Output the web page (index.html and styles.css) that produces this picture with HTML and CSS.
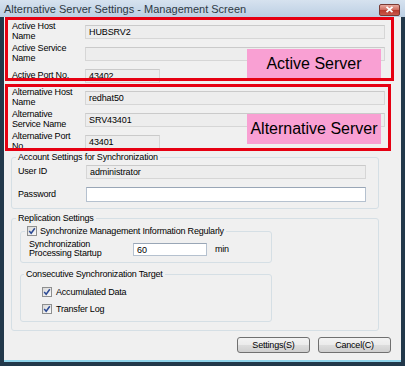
FILE: index.html
```html
<html>
<head>
    <title>Alternative Server Settings</title>
    <meta charset="UTF-8">
    <link rel="stylesheet" href="styles.css">
</head>
<body>
    <div class="window">
        <div class="titlebar">
            <span class="title">Alternative Server Settings - Management Screen</span>
            <span class="close-btn">
                <svg width="9" height="7" viewBox="0 0 9 7">
                    <path d="M1.5 0.8 L7.5 6.2 M7.5 0.8 L1.5 6.2" stroke="#fff" stroke-width="1.8"/>
                </svg>
            </span>
        </div>

        <div class="client">
            <!-- Server rows -->
            <div class="server-rows">
                <div class="srv-row">
                    <label class="lbl">Active Host<br>Name</label>
                    <div class="field ro">HUBSRV2</div>
                </div>
                <div class="srv-row">
                    <label class="lbl">Active Service<br>Name</label>
                    <div class="field ro"></div>
                </div>
                <div class="srv-row">
                    <label class="lbl">Active Port No.</label>
                    <div class="field ro short">43402</div>
                </div>
                <div class="srv-row">
                    <label class="lbl">Alternative Host<br>Name</label>
                    <div class="field ro">redhat50</div>
                </div>
                <div class="srv-row">
                    <label class="lbl">Alternative<br>Service Name</label>
                    <div class="field ro">SRV43401</div>
                </div>
                <div class="srv-row">
                    <label class="lbl">Alternative Port<br>No.</label>
                    <div class="field ro short">43401</div>
                </div>
            </div>

            <!-- Account -->
            <fieldset class="group account">
                <legend>Account Settings for Synchronization</legend>
                <div class="acc-rows">
                    <div class="acc-row">
                        <label class="lbl">User ID</label>
                        <div class="field ro acc-field">administrator</div>
                    </div>
                    <div class="acc-row">
                        <label class="lbl">Password</label>
                        <div class="field edit acc-field"></div>
                    </div>
                </div>
            </fieldset>

            <!-- Replication -->
            <fieldset class="group replication">
                <legend>Replication Settings</legend>
                <div class="rep-body">
                    <fieldset class="group sub sync">
                        <legend class="check-legend">
                            <span class="check"><svg width="8" height="8" viewBox="0 0 8 8"><path d="M1.2 4 L3.2 6.3 L6.8 1.3" fill="none" stroke="#2c4a94" stroke-width="1.5"/></svg></span>
                            Synchronize Management Information Regularly
                        </legend>
                        <div class="sync-row">
                            <label class="lbl">Synchronization<br>Processing Startup</label>
                            <div class="field edit num">60</div>
                            <span class="unit">min</span>
                        </div>
                    </fieldset>

                    <fieldset class="group sub target">
                        <legend>Consecutive Synchronization Target</legend>
                        <div class="check-list">
                            <div class="check-row">
                                <span class="check"><svg width="8" height="8" viewBox="0 0 8 8"><path d="M1.2 4 L3.2 6.3 L6.8 1.3" fill="none" stroke="#2c4a94" stroke-width="1.5"/></svg></span>
                                Accumulated Data
                            </div>
                            <div class="check-row">
                                <span class="check"><svg width="8" height="8" viewBox="0 0 8 8"><path d="M1.2 4 L3.2 6.3 L6.8 1.3" fill="none" stroke="#2c4a94" stroke-width="1.5"/></svg></span>
                                Transfer Log
                            </div>
                        </div>
                    </fieldset>
                </div>
            </fieldset>

            <div class="buttons">
                <button type="button" class="btn">Settings(S)</button>
                <button type="button" class="btn">Cancel(C)</button>
            </div>
        </div>

        <!-- Annotation boxes drawn over the dialog -->
        <div class="mark mark-active">
            <span class="tag tag-active">Active Server</span>
        </div>
        <div class="mark mark-alt">
            <span class="tag tag-alt">Alternative Server</span>
        </div>
    </div>
</body>
</html>
```

FILE: styles.css
```css
:root {
    --client: #f0f0f0;
    --frame: #22384a;
    --group-line: #d5dfe5;
    --mark-red: #e60012;
    --mark-pink: #f9a0d3;
}

body {
    margin: 0;
    font-family: "Liberation Sans", Arial, sans-serif;
    font-size: 9px;
    letter-spacing: -0.2px;
    color: #000;
    background: var(--frame);
}

.window {
    position: relative;
    width: 405px;
    height: 366px;
    background: var(--frame);
    display: flex;
    flex-direction: column;
}

.titlebar {
    height: 17px;
    display: flex;
    align-items: center;
    justify-content: space-between;
    padding: 0 5px 0 4px;
    background: linear-gradient(#d6e2ef, #bccfe3);
    box-sizing: border-box;
}

.title {
    font-size: 11px;
    letter-spacing: 0;
    color: #2e3944;
    white-space: nowrap;
}

.close-btn {
    width: 21px;
    height: 12px;
    margin-top: 2px;
    box-sizing: border-box;
    border: 1px solid #7a3a33;
    border-radius: 2px;
    background: linear-gradient(#e8aaa0, #cf6a5d 50%, #b8392c 51%, #c9584a);
    display: flex;
    align-items: center;
    justify-content: center;
}

.client {
    background: var(--client);
    margin: 0 4px;
    height: 345px;
    padding-top: 4px;
    box-sizing: border-box;
    border-bottom: 2px solid #8fd3ea;
}

/* server rows */
.server-rows {
    display: flex;
    flex-direction: column;
    gap: 1px;
    padding-left: 8px;
}

.srv-row {
    display: grid;
    grid-template-columns: 73px 300px;
    align-items: center;
    height: 21px;
}

.lbl {
    line-height: 9.5px;
}

.field {
    height: 14px;
    box-sizing: border-box;
    padding-left: 3px;
    font-size: 9px;
    letter-spacing: -0.1px;
    line-height: 12px;
    white-space: nowrap;
}

.field.ro {
    background: #ededed;
    border: 1px solid #d6d6d6;
    border-top-color: #cacaca;
}

.field.edit {
    background: #fff;
    border: 1px solid #b5c1cf;
    border-top-color: #99a6b6;
}

.field.short {
    width: 75px;
}

/* group boxes */
.group {
    margin: 0;
    padding: 0;
    border: 1px solid var(--group-line);
    border-radius: 3px;
    min-inline-size: 0;
}

.group legend {
    margin-left: 4px;
    padding: 0 2px;
    line-height: 10px;
}

.account {
    margin: 0 22px 0 7px;
}

.acc-rows {
    display: flex;
    flex-direction: column;
    gap: 8px;
    padding: 3px 0 6px 6px;
}

.acc-row {
    display: grid;
    grid-template-columns: 68px 280px;
    align-items: center;
}

.acc-row + .acc-row .acc-field {
    height: 15px;
}

.replication {
    margin: 4px 22px 0 7px;
}

.rep-body {
    padding: 3px 8px 8px 8px;
}

.sub {
    width: 252px;
    box-sizing: border-box;
}

.check-legend {
    display: flex;
    align-items: center;
    gap: 3px;
    line-height: 12px;
}

.check {
    width: 10px;
    height: 10px;
    box-sizing: border-box;
    border: 1px solid #8e8f8f;
    background: linear-gradient(135deg, #d8d8d8, #fafafa);
    display: inline-flex;
    align-items: center;
    justify-content: center;
}

.sync-row {
    display: grid;
    grid-template-columns: 104px 74px auto;
    align-items: center;
    height: 22px;
    padding: 2px 8px;
}

.sync-row .num {
    height: 13px;
}

.sync-row .unit {
    margin-left: 8px;
}

.target {
    margin-top: 6px;
}

.target legend {
    margin-left: 3px;
}

.check-list {
    display: flex;
    flex-direction: column;
    gap: 2px;
    padding: 5px 0 5px 21px;
}

.check-row {
    display: flex;
    align-items: center;
    gap: 4px;
    height: 15px;
}

/* buttons */
.buttons {
    display: flex;
    justify-content: flex-end;
    gap: 8px;
    padding: 6px 10px 0 0;
}

.btn {
    width: 73px;
    height: 16px;
    padding: 0;
    font-family: inherit;
    font-size: 9px;
    letter-spacing: -0.2px;
    color: #000;
    border: 1px solid #707070;
    border-radius: 3px;
    background: linear-gradient(#f3f3f3, #ebebeb 50%, #dddddd 51%, #cfcfcf);
}

/* annotation marks */
.mark {
    position: absolute;
    border: 3px solid var(--mark-red);
    box-sizing: border-box;
    pointer-events: none;
}

.mark-active {
    left: 5px;
    top: 17px;
    width: 389px;
    height: 64px;
}

.mark-alt {
    left: 5px;
    top: 84px;
    width: 386px;
    height: 67px;
}

.tag {
    position: absolute;
    left: 239px;
    width: 134px;
    background: var(--mark-pink);
    font-size: 16px;
    letter-spacing: 0;
    display: flex;
    align-items: center;
    justify-content: center;
}

.tag-active {
    top: 29px;
    height: 29px;
}

.tag-alt {
    top: 27px;
    height: 30px;
}
```
